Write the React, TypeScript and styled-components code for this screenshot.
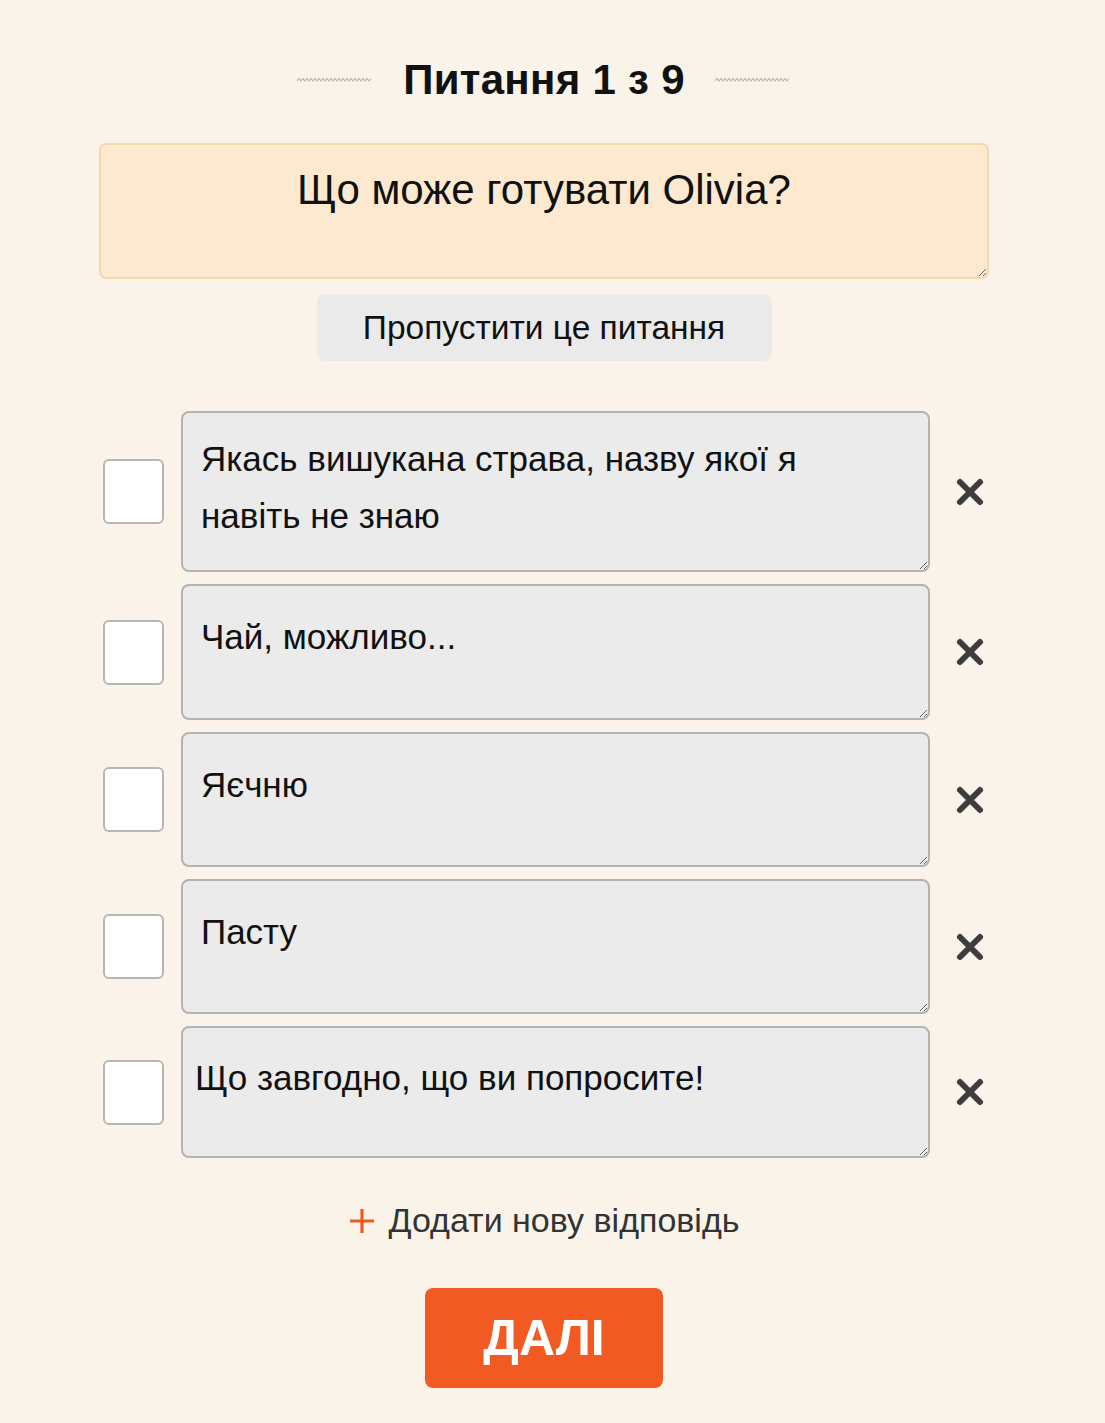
import React from "react";
import styled, { createGlobalStyle } from "styled-components";

const Global = createGlobalStyle`
  html, body { margin: 0; padding: 0; background: #faf3ea; }
  body { font-family: "Liberation Sans", Arial, sans-serif; color: #111; }
  * { box-sizing: border-box; }
`;

const Page = styled.div`
  width: 1105px;
  min-height: 1423px;
  background: #faf3ea;
  padding: 52px 0 0 99px;
`;

const Column = styled.div`
  width: 890px;
  display: flex;
  flex-direction: column;
  align-items: center;
`;

const TitleRow = styled.div`
  display: flex;
  align-items: center;
  gap: 30px;
  height: 56px;
`;

const Title = styled.h1`
  margin: 0;
  font-size: 42px;
  font-weight: 700;
  color: #111;
  letter-spacing: 0.3px;
`;

const Wave = () => (
  <svg width="76" height="6" viewBox="0 0 76 6">
    <path
      d={Array.from({ length: 19 })
        .map((_, i) => `${i === 0 ? "M" : "L"}${i * 4} 4 L${i * 4 + 2} 1.5`)
        .join(" ")}
      fill="none"
      stroke="#bdbab5"
      strokeWidth="1.2"
    />
  </svg>
);

const QuestionBox = styled.textarea`
  margin-top: 35px;
  width: 890px;
  height: 136px;
  background: #fce9cf;
  border: 2px solid #f5d8ae;
  border-radius: 7px;
  font-family: "Liberation Sans", Arial, sans-serif;
  font-size: 42px;
  text-align: center;
  color: #111;
  padding: 21px 20px 0;
  line-height: 48px;
  outline: none;
`;

const SkipButton = styled.button`
  margin-top: 15px;
  width: 455px;
  height: 67px;
  border: none;
  border-radius: 8px;
  background: #eaeaea;
  font-family: "Liberation Sans", Arial, sans-serif;
  font-size: 33.5px;
  color: #111;
  cursor: pointer;
`;

const Answers = styled.div`
  margin-top: 50px;
  width: 890px;
  display: flex;
  flex-direction: column;
  gap: 12px;
`;

const Row = styled.div`
  display: flex;
  align-items: center;
  padding-left: 4px;
`;

const Check = styled.div`
  width: 61px;
  height: 65px;
  flex: none;
  background: #fff;
  border: 2px solid #b8b6b3;
  border-radius: 6px;
`;

const AnswerText = styled.textarea<{ $h: number; $pl: number; $pt: number }>`
  margin-left: 17px;
  width: 749px;
  height: ${(p) => p.$h}px;
  flex: none;
  background: #ebebeb;
  border: 2px solid #b3b3b3;
  border-radius: 8px;
  font-family: "Liberation Sans", Arial, sans-serif;
  font-size: 35px;
  line-height: 57px;
  color: #111;
  padding: ${(p) => p.$pt}px 34px 0 ${(p) => p.$pl}px;
  outline: none;
`;

const Remove = styled.button`
  margin-left: 23px;
  width: 34px;
  height: 34px;
  padding: 0;
  border: none;
  background: transparent;
  display: flex;
  align-items: center;
  justify-content: center;
  cursor: pointer;
`;

const AddLink = styled.button`
  margin-top: 43px;
  display: flex;
  align-items: center;
  gap: 14px;
  border: none;
  background: transparent;
  font-family: "Liberation Sans", Arial, sans-serif;
  font-size: 34px;
  color: #333;
  cursor: pointer;
  padding: 0;
`;

const NextButton = styled.button`
  margin-top: 48px;
  width: 238px;
  height: 100px;
  border: none;
  border-radius: 8px;
  background: #f15a22;
  color: #fff;
  font-family: "Liberation Sans", Arial, sans-serif;
  font-weight: 700;
  font-size: 50px;
  cursor: pointer;
`;

const XIcon = () => (
  <svg width="32" height="32" viewBox="0 0 32 32">
    <path d="M6 6 L26 26 M26 6 L6 26" stroke="#3d3d3d" strokeWidth="6" strokeLinecap="round" />
  </svg>
);

const PlusIcon = () => (
  <svg width="26" height="26" viewBox="0 0 26 26">
    <path d="M13 1 V25 M1 13 H25" stroke="#f05a22" strokeWidth="3.2" />
  </svg>
);

const answers = [
  { text: "Якась вишукана страва, назву якої я навіть не знаю", h: 161, pl: 18, pt: 17 },
  { text: "Чай, можливо...", h: 136, pl: 18, pt: 22 },
  { text: "Яєчню", h: 135, pl: 18, pt: 22 },
  { text: "Пасту", h: 135, pl: 18, pt: 22 },
  { text: "Що завгодно, що ви попросите!", h: 132, pl: 12, pt: 21 },
];

export default function App() {
  return (
    <Page>
      <Global />
      <Column>
        <TitleRow>
          <Wave />
          <Title>Питання 1 з 9</Title>
          <Wave />
        </TitleRow>
        <QuestionBox defaultValue="Що може готувати Olivia?" />
        <SkipButton>Пропустити це питання</SkipButton>
        <Answers>
          {answers.map((a, i) => (
            <Row key={i}>
              <Check />
              <AnswerText $h={a.h} $pl={a.pl} $pt={a.pt} defaultValue={a.text} />
              <Remove aria-label="Видалити">
                <XIcon />
              </Remove>
            </Row>
          ))}
        </Answers>
        <AddLink>
          <PlusIcon />
          Додати нову відповідь
        </AddLink>
        <NextButton>ДАЛІ</NextButton>
      </Column>
    </Page>
  );
}
